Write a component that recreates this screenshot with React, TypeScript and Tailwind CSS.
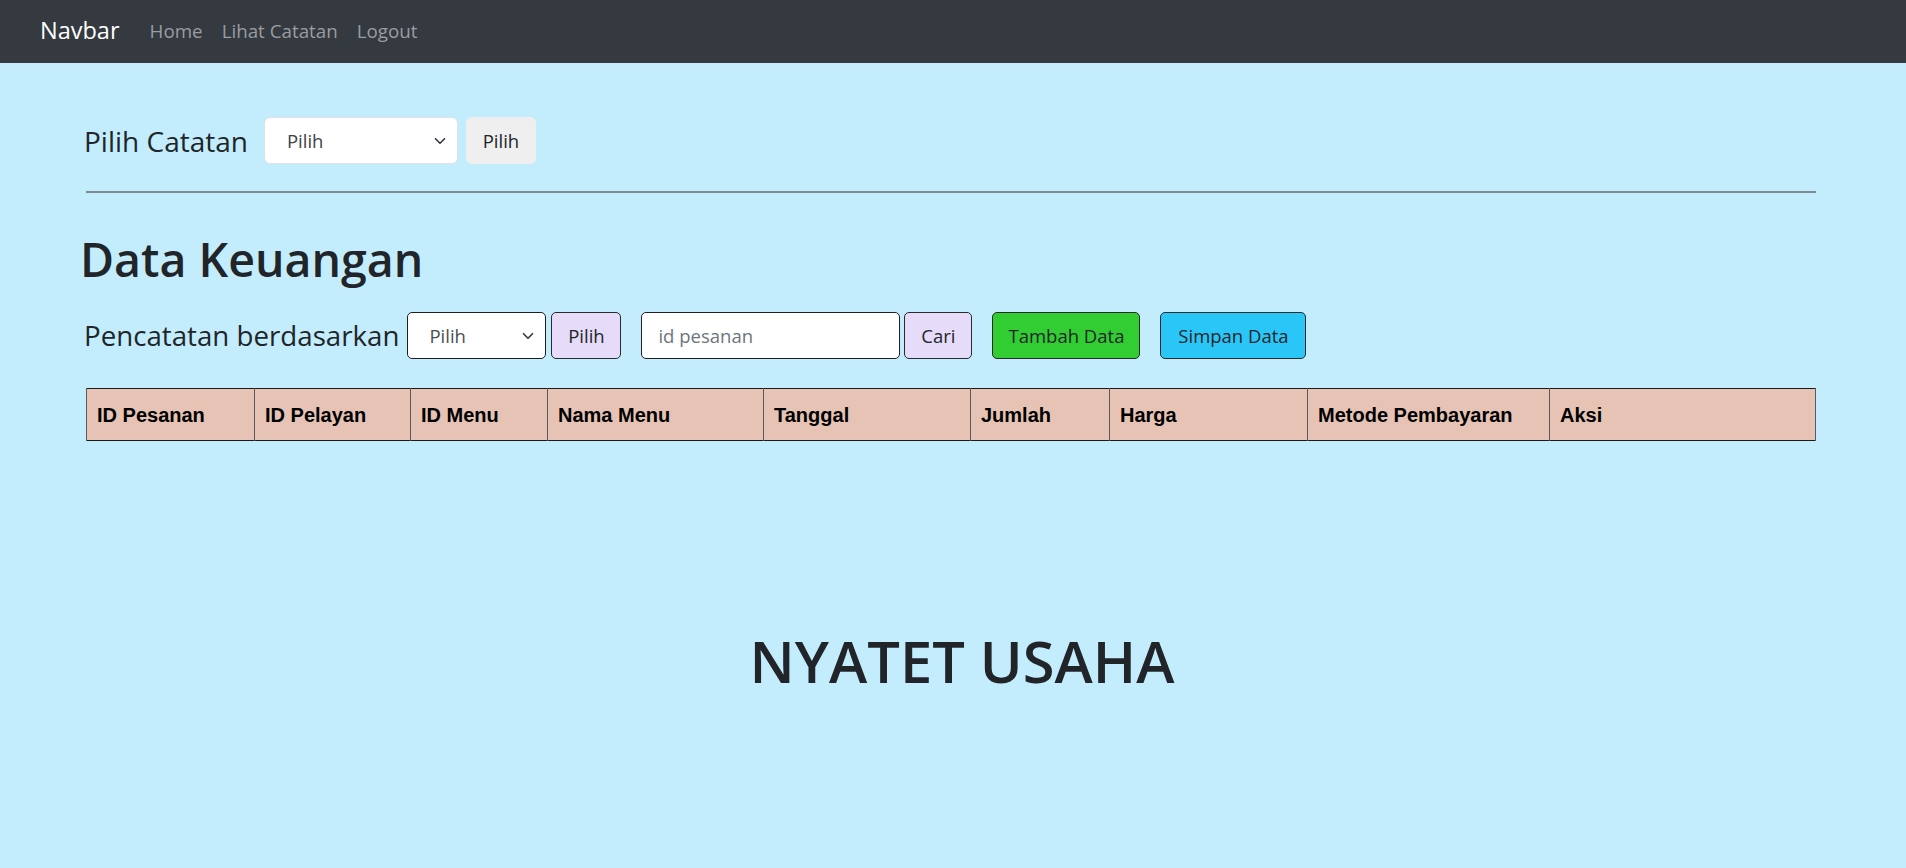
import React, { useState } from 'react';

const columns = [
  { label: 'ID Pesanan', w: 'w-[168px]' },
  { label: 'ID Pelayan', w: 'w-[156px]' },
  { label: 'ID Menu', w: 'w-[137px]' },
  { label: 'Nama Menu', w: 'w-[216px]' },
  { label: 'Tanggal', w: 'w-[207px]' },
  { label: 'Jumlah', w: 'w-[139px]' },
  { label: 'Harga', w: 'w-[198px]' },
  { label: 'Metode Pembayaran', w: 'w-[242px]' },
  { label: 'Aksi', w: '' },
];

const Chevron: React.FC = () => (
  <svg
    className="pointer-events-none absolute right-[12px] top-1/2 -translate-y-1/2"
    width="12"
    height="12"
    viewBox="0 0 16 16"
    fill="none"
    stroke="#343a40"
    strokeWidth="2.2"
    strokeLinecap="round"
    strokeLinejoin="round"
  >
    <path d="M2 5l6 6 6-6" />
  </svg>
);

const App: React.FC = () => {
  const [catatan, setCatatan] = useState('');
  const [kategori, setKategori] = useState('');
  const [query, setQuery] = useState('');

  return (
    <div className="min-h-[868px] bg-[#c3edfd] text-[#212529] font-['Open_Sans',sans-serif]">
      {/* Navbar */}
      <nav className="h-[63px] bg-[#343a40] flex items-center pl-[40px]">
        <a href="#" className="text-white text-[23.5px] mr-[30px] leading-none pb-[2px]">
          Navbar
        </a>
        <div className="flex items-center gap-[19px] text-[18.8px] text-[#9a9da1] pb-[1px]">
          <a href="#">Home</a>
          <a href="#">Lihat Catatan</a>
          <a href="#">Logout</a>
        </div>
      </nav>

      <main className="pl-[86px] pr-[90px]">
        {/* Pilih catatan */}
        <div className="flex items-center pt-[54px]">
          <span className="text-[28px] mr-[16px] -ml-[2px]">Pilih Catatan</span>
          <div className="relative">
            <select
              value={catatan}
              onChange={e => setCatatan(e.target.value)}
              className="appearance-none w-[194px] h-[47px] bg-white border border-[#dee2e6] rounded-[6px] pl-[22px] text-[18.5px] text-[#3d4246] outline-none"
            >
              <option value="">Pilih</option>
            </select>
            <Chevron />
          </div>
          <button className="ml-[8px] w-[70px] h-[47px] bg-[#efefef] rounded-[6px] text-[18.5px]">
            Pilih
          </button>
        </div>

        <hr className="mt-[27px] border-0 h-[2px] bg-[#7d8b90]" />

        <h1 className="mt-[38px] text-[46.5px] font-semibold leading-[56px] -ml-[6px]">Data Keuangan</h1>

        {/* Filter bar */}
        <div className="flex items-center mt-[25px]">
          <span className="text-[27.7px] -ml-[2px] mr-[8px]">Pencatatan berdasarkan</span>
          <div className="relative">
            <select
              value={kategori}
              onChange={e => setKategori(e.target.value)}
              className="appearance-none w-[139px] h-[47px] bg-white border border-[#1f1f1f] rounded-[5px] pl-[21px] text-[18.5px] text-[#4a4f54] outline-none"
            >
              <option value="">Pilih</option>
            </select>
            <Chevron />
          </div>
          <button className="ml-[5px] w-[70px] h-[47px] bg-[#e6dbf9] border border-[#2a2a2a] rounded-[5px] text-[18.5px]">
            Pilih
          </button>
          <input
            value={query}
            onChange={e => setQuery(e.target.value)}
            placeholder="id pesanan"
            className="ml-[20px] w-[259px] h-[47px] bg-white border border-[#1f1f1f] rounded-[5px] px-[16px] text-[18.5px] placeholder:text-[#6c757d] outline-none"
          />
          <button className="ml-[4px] w-[68px] h-[47px] bg-[#e6dbf9] border border-[#2a2a2a] rounded-[5px] text-[18.5px]">
            Cari
          </button>
          <button className="ml-[20px] w-[148px] h-[47px] bg-[#32cd32] border border-[#2a2a2a] rounded-[5px] text-[18.5px]">
            Tambah Data
          </button>
          <button className="ml-[20px] w-[146px] h-[47px] bg-[#29c6f7] border border-[#2a2a2a] rounded-[5px] text-[18.5px]">
            Simpan Data
          </button>
        </div>

        {/* Table */}
        <table className="mt-[29px] w-full border-collapse border border-[#1a1a1a] bg-[#e6c3b5] font-['Liberation_Sans',Arial,sans-serif]">
          <thead>
            <tr className="h-[52px]">
              {columns.map(c => (
                <th
                  key={c.label}
                  className={`${c.w} border-x border-[#5a5a5a] text-left px-[10px] text-[20px] font-bold text-black`}
                >
                  {c.label}
                </th>
              ))}
            </tr>
          </thead>
          <tbody></tbody>
        </table>

        <h2 className="mt-[191px] text-center text-[57.8px] font-semibold leading-none pl-[22px]">
          NYATET USAHA
        </h2>
      </main>
    </div>
  );
};

export default App;
